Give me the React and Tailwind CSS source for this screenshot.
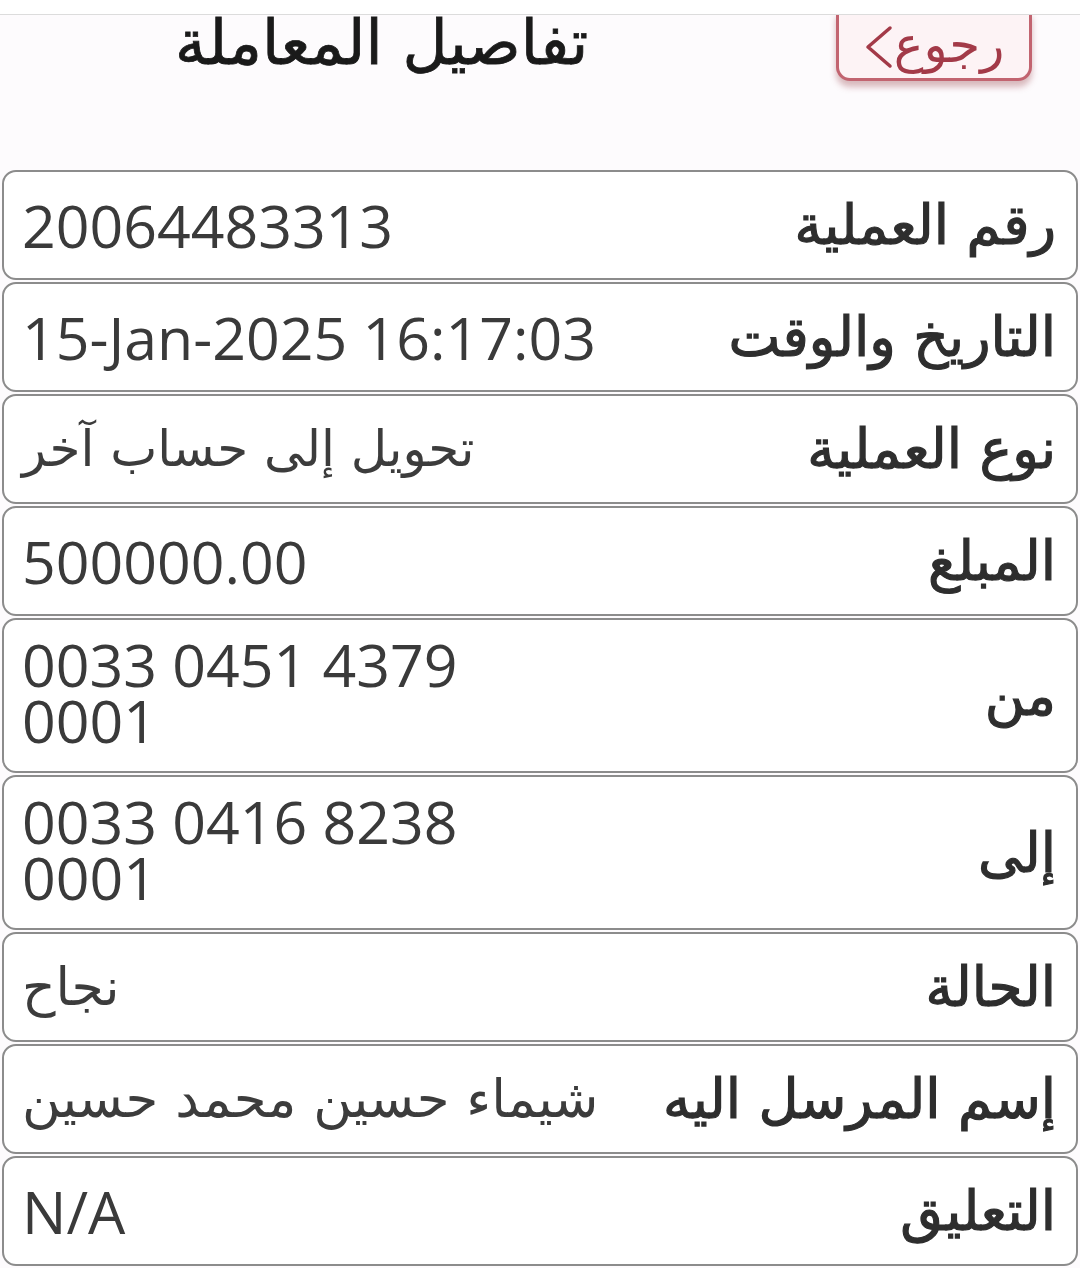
const rows = [
  { label: "رقم العملية", value: ["20064483313"] },
  { label: "التاريخ والوقت", value: ["15-Jan-2025 16:17:03"] },
  { label: "نوع العملية", value: ["تحويل إلى حساب آخر"], ar: "text-[50px]" },
  { label: "المبلغ", value: ["500000.00"] },
  { label: "من", value: ["0033 0451 4379", "0001"] },
  { label: "إلى", value: ["0033 0416 8238", "0001"] },
  { label: "الحالة", value: ["نجاح"], ar: "text-[52px]" },
  { label: "إسم المرسل اليه", value: ["شيماء حسين محمد حسين"], ar: "text-[53px]" },
  { label: "التعليق", value: ["N/A"] },
];

const arFont = { fontFamily: '"DejaVu Sans", sans-serif' };

const DetailRow = ({ row }) => {
  const tall = row.value.length > 1;
  return (
    <div
      className={`flex items-center justify-between rounded-[14px] border-2 border-[#8c8c8c] bg-white pl-[18px] pr-[20px] ${
        tall ? "h-[155px]" : "h-[110px]"
      }`}
    >
      <div className={tall ? "flex flex-col -mt-[8px]" : "flex flex-col"}>
        {row.value.map((line, i) =>
          row.ar ? (
            <p key={i} dir="rtl" className={`${row.ar} leading-[62px] text-[#3c3c3c]`} style={arFont}>
              {line}
            </p>
          ) : (
            <p key={i} className="text-[59px] leading-[56px] text-[#3a3a3a] font-['Open_Sans',sans-serif]">
              {line}
            </p>
          )
        )}
      </div>
      <p
        dir="rtl"
        className="text-[55px] leading-[66px] text-[#2e2e2e] [-webkit-text-stroke:1.2px_#2e2e2e]"
        style={arFont}
      >
        {row.label}
      </p>
    </div>
  );
};

export default function App() {
  return (
    <div className="w-[1080px] h-[1268px] overflow-hidden bg-[#fdfbfd]">
      {/* top strip */}
      <div className="h-[15px] bg-white border-b border-[#dcdcdc]"></div>

      {/* header */}
      <div className="h-[155px] flex items-start overflow-hidden">
        <h1
          dir="rtl"
          className="ml-[175px] -mt-[10px] text-[62px] leading-[76px] text-[#1a1a1a] [-webkit-text-stroke:0.8px_#1a1a1a]"
          style={arFont}
        >
          تفاصيل المعاملة
        </h1>
        <div className="ml-auto mr-[48px] -mt-[4px]">
          <div className="flex items-center h-[70px] w-[196px] justify-center rounded-b-[14px] border-[3px] border-t-0 border-[#c26470] bg-[#fdf3f5] shadow-[0_6px_6px_rgba(150,60,70,0.35)]">
            <svg width="30" height="44" viewBox="0 0 30 44" className="mt-[4px]">
              <polyline
                points="26,3 4,22 26,41"
                fill="none"
                stroke="#a33a48"
                strokeWidth="3.5"
                strokeLinecap="round"
                strokeLinejoin="round"
              />
            </svg>
            <span dir="rtl" className="text-[50px] leading-[56px] text-[#a33a48]" style={arFont}>
              رجوع
            </span>
          </div>
        </div>
      </div>

      {/* rows */}
      <div className="flex flex-col gap-[2px] px-[2px]">
        {rows.map((row, i) => (
          <DetailRow key={i} row={row} />
        ))}
      </div>
    </div>
  );
}
